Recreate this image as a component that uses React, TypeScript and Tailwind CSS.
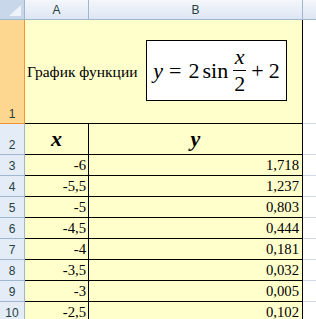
const rows: [string, string, string][] = [
  ["3", "-6", "1,718"],
  ["4", "-5,5", "1,237"],
  ["5", "-5", "0,803"],
  ["6", "-4,5", "0,444"],
  ["7", "-4", "0,181"],
  ["8", "-3,5", "0,032"],
  ["9", "-3", "0,005"],
  ["10", "-2,5", "0,102"],
]

function RowHead({ n, active }: { n: string; active?: boolean }) {
  return (
    <div
      className={`w-[25px] shrink-0 flex items-end justify-center text-[12px] leading-none font-['Liberation_Sans',sans-serif] text-[#27413e] border-r border-b ${
        active ? "bg-[#fdd690] border-[#f29436]" : "bg-[#e4ecf7] border-[#9eb6ce]"
      }`}
    >
      <span className="pb-[3px]">{n}</span>
    </div>
  )
}

export default function App() {
  return (
    <div className="w-[316px] h-[319px] overflow-hidden bg-white flex flex-col">
      {/* column headers */}
      <div className="flex h-[20px] shrink-0">
        <div className="w-[25px] shrink-0 bg-[#c9d7ea] border-r border-b border-[#9eb6ce] relative">
          <svg className="absolute left-[9px] top-[5px]" width="12" height="11" viewBox="0 0 12 11">
            <polygon points="12,0 12,11 0,11" fill="#eef3fa" />
          </svg>
        </div>
        <div className="w-[64px] shrink-0 bg-gradient-to-b from-[#f4f7fc] to-[#dde6f2] border-r border-b border-[#9eb6ce] flex items-center justify-center text-[12px] text-[#27413e] font-['Liberation_Sans',sans-serif]">
          A
        </div>
        <div className="w-[214px] shrink-0 bg-gradient-to-b from-[#f4f7fc] to-[#dde6f2] border-r border-b border-[#9eb6ce] flex items-center justify-center text-[12px] text-[#27413e] font-['Liberation_Sans',sans-serif]">
          B
        </div>
        <div className="flex-1 bg-gradient-to-b from-[#f4f7fc] to-[#dde6f2] border-b border-[#9eb6ce]" />
      </div>

      {/* row 1 */}
      <div className="flex h-[104px] shrink-0">
        <RowHead n="1" active />
        <div className="w-[278px] shrink-0 bg-[#ffffcc] border-r border-b border-black flex items-center font-['Liberation_Serif',serif] text-black">
          <span className="w-[121px] shrink-0 pl-[2px] text-[15.5px] whitespace-nowrap">График функции</span>
          <div className="w-[141px] h-[61px] -mt-[2px] bg-white border border-black flex items-center justify-center text-[22px] leading-none">
            <span className="italic">y</span>
            <span className="ml-[6px]">=</span>
            <span className="ml-[7px]">2</span>
            <span className="ml-[3px]">sin</span>
            <span className="ml-[5px] flex flex-col items-center">
              <span className="italic px-[1px]">x</span>
              <span className="h-px w-[13px] bg-black my-[2px]" />
              <span>2</span>
            </span>
            <span className="ml-[5px]">+</span>
            <span className="ml-[5px]">2</span>
          </div>
        </div>
        <div className="flex-1 border-b border-[#d0d7e5]" />
      </div>

      {/* row 2 */}
      <div className="flex h-[31px] shrink-0 font-['Liberation_Serif',serif]">
        <RowHead n="2" />
        <div className="w-[64px] shrink-0 bg-[#ffffcc] border-r border-b border-black flex items-center justify-center text-[22px] font-bold italic leading-none">
          x
        </div>
        <div className="w-[214px] shrink-0 bg-[#ffffcc] border-r border-b border-black flex items-center justify-center text-[22px] font-bold italic leading-none">
          y
        </div>
        <div className="flex-1 border-b border-[#d0d7e5]" />
      </div>

      {rows.map(([n, x, y]) => (
        <div key={n} className="flex h-[21px] shrink-0 font-['Liberation_Serif',serif]">
          <RowHead n={n} />
          <div className="w-[64px] shrink-0 bg-[#ffffcc] border-r border-b border-black flex items-end justify-end pr-[2px] text-[14.7px] leading-[19px]">
            {x}
          </div>
          <div className="w-[214px] shrink-0 bg-[#ffffcc] border-r border-b border-black flex items-end justify-end pr-[3px] text-[14.7px] leading-[19px]">
            {y}
          </div>
          <div className="flex-1 border-b border-[#d0d7e5]" />
        </div>
      ))}
    </div>
  )
}
